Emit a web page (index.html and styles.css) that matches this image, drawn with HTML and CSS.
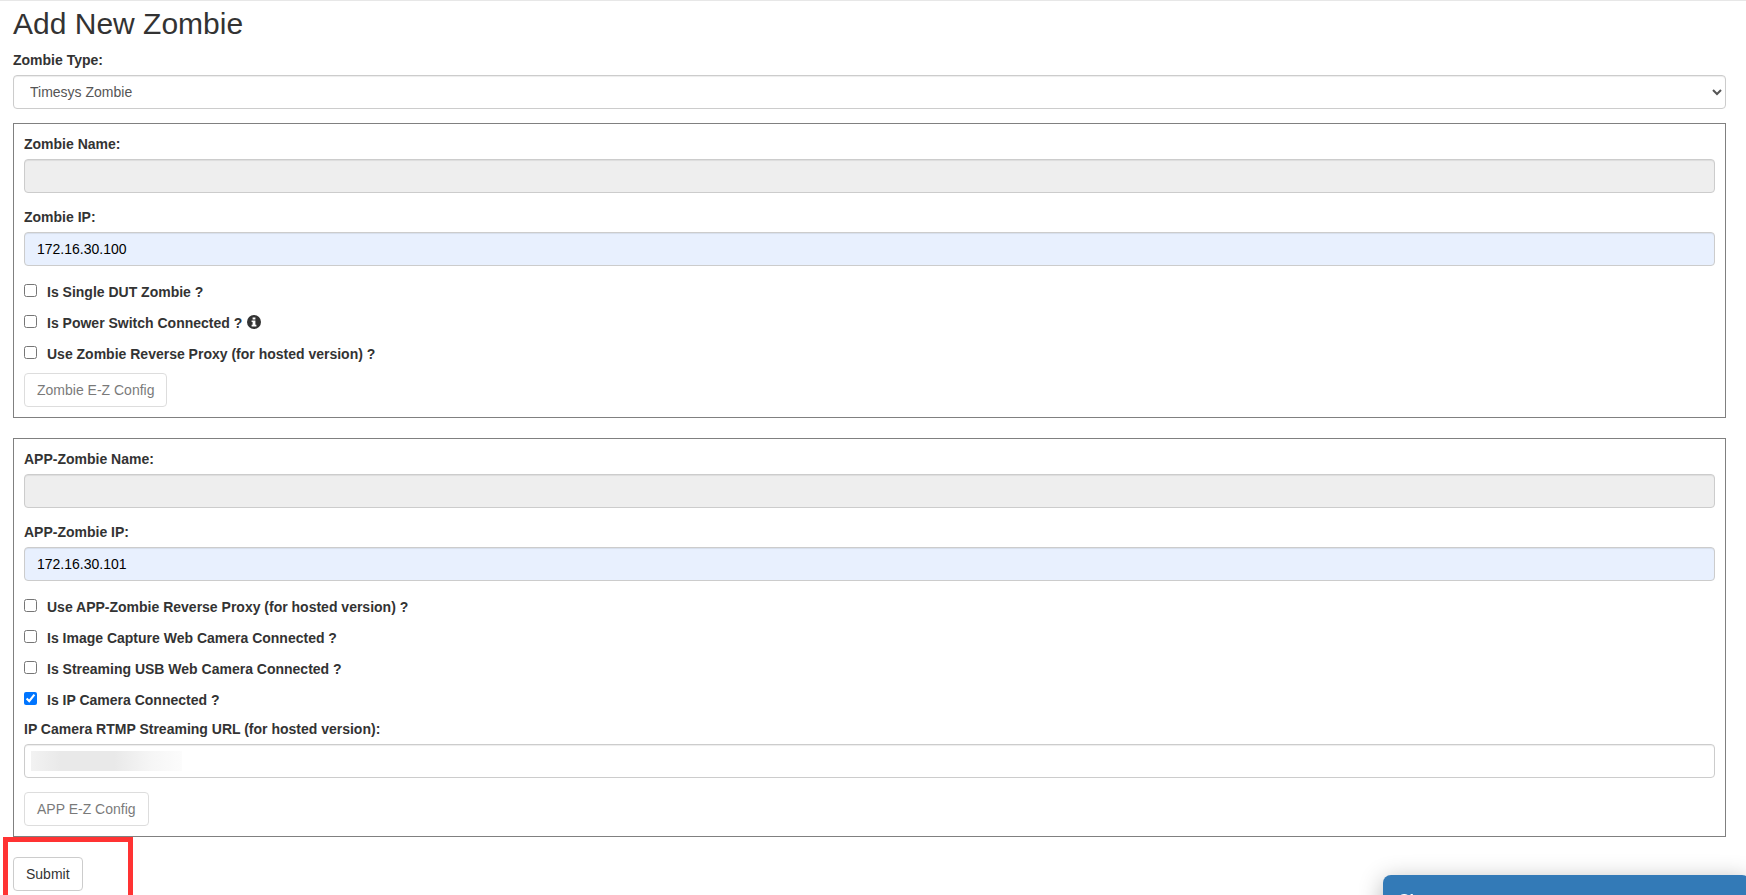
FILE: index.html
```html
<!DOCTYPE html>
<html lang="en">
  <head>
    <meta charset="UTF-8" />
    <meta name="viewport" content="width=device-width, initial-scale=1.0" />
    <title>Add New Zombie</title>
    <link rel="stylesheet" href="styles.css">
  </head>
  <body>
    <form class="zombie-form">
      <h2>Add New Zombie</h2>

      <div class="form-group">
        <label for="zombie-type">Zombie Type:</label>
        <select id="zombie-type" class="form-control">
          <option selected>Timesys Zombie</option>
        </select>
      </div>

      <div class="panel">
        <div class="form-group">
          <label for="zombie-name">Zombie Name:</label>
          <input id="zombie-name" class="form-control" type="text" disabled />
        </div>
        <div class="form-group">
          <label for="zombie-ip">Zombie IP:</label>
          <input id="zombie-ip" class="form-control autofilled" type="text" value="172.16.30.100" />
        </div>
        <div class="checks">
          <label class="check"><input type="checkbox" /> Is Single DUT Zombie ?</label>
          <label class="check">
            <input type="checkbox" /> Is Power Switch Connected ?
            <svg class="info-icon" viewBox="0 0 14 14" aria-hidden="true">
              <circle cx="7" cy="7" r="7" />
              <path d="M5.6 2.4h2.8v2H5.6zM4.6 5.5h3.8v4.3h1v1.6H4.6V9.800h1V7.100h-1z" />
            </svg>
          </label>
          <label class="check"><input type="checkbox" /> Use Zombie Reverse Proxy (for hosted version) ?</label>
        </div>
        <button class="btn" type="button" disabled>Zombie E-Z Config</button>
      </div>

      <div class="panel">
        <div class="form-group">
          <label for="app-name">APP-Zombie Name:</label>
          <input id="app-name" class="form-control" type="text" disabled />
        </div>
        <div class="form-group">
          <label for="app-ip">APP-Zombie IP:</label>
          <input id="app-ip" class="form-control autofilled" type="text" value="172.16.30.101" />
        </div>
        <div class="checks">
          <label class="check"><input type="checkbox" /> Use APP-Zombie Reverse Proxy (for hosted version) ?</label>
          <label class="check"><input type="checkbox" /> Is Image Capture Web Camera Connected ?</label>
          <label class="check"><input type="checkbox" /> Is Streaming USB Web Camera Connected ?</label>
          <label class="check"><input type="checkbox" checked /> Is IP Camera Connected ?</label>
        </div>
        <div class="form-group">
          <label for="rtmp-url">IP Camera RTMP Streaming URL (for hosted version):</label>
          <input id="rtmp-url" class="form-control redacted" type="text" />
        </div>
        <button class="btn" type="button" disabled>APP E-Z Config</button>
      </div>

      <div class="submit-row">
        <button class="btn" type="submit">Submit</button>
        <div class="highlight"></div>
      </div>
    </form>

    <div class="chat-widget">Chat</div>
  </body>
</html>
```

FILE: styles.css
```css
* {
  box-sizing: border-box;
}
body {
  margin: 0;
  height: 100vh;
  overflow: hidden;
  border-top: 1px solid #e7e7e7;
  font-family: "Liberation Sans", Arial, sans-serif;
  font-size: 14px;
  line-height: 20px;
  color: #333;
  background: #fff;
}
h2 {
  margin: 0 0 10px;
  font-size: 30px;
  font-weight: 500;
  line-height: 33px;
}
label {
  display: block;
  margin-bottom: 5px;
  font-weight: bold;
}
.zombie-form {
  padding: 6px 20px 0 13px;
}
.form-group {
  margin-bottom: 14px;
}
.form-control {
  display: block;
  width: 100%;
  height: 34px;
  padding: 6px 12px;
  border: 1px solid #ccc;
  border-radius: 4px;
  font: inherit;
  color: #555;
  background: #fff;
  box-shadow: inset 0 1px 1px rgba(0, 0, 0, 0.075);
}
.form-control:disabled {
  background: #eee;
}
.form-control.autofilled {
  color: #000;
  background: #e8f0fe;
}
.form-control.redacted {
  background: linear-gradient(to right, #f2f2f2, #e9e9e9 20%, #e9e9e9 55%, #f6f6f6 80%, #fcfcfc) 6px 6px / 151px 20px no-repeat #fff;
}
.panel {
  margin-bottom: 20px;
  padding: 10px;
  border: 1px solid #808080;
}
.checks {
  display: flex;
  flex-direction: column;
  gap: 11px;
  padding-top: 2px;
  margin-bottom: 9px;
}
.check {
  display: flex;
  align-items: flex-start;
  margin: 0;
}
.check input {
  width: 13px;
  height: 13px;
  margin: 2px 10px 0 0;
}
.info-icon {
  width: 14px;
  height: 14px;
  margin: 2px 0 0 5px;
  fill: #333;
}
.info-icon path {
  fill: #fff;
}
.btn {
  display: block;
  height: 34px;
  padding: 6px 12px;
  border: 1px solid #ccc;
  border-radius: 4px;
  font: inherit;
  color: #333;
  background: #fff;
}
.btn:disabled {
  opacity: 0.65;
}
.submit-row {
  position: relative;
}
.highlight {
  position: absolute;
  top: -20px;
  left: -10px;
  width: 130px;
  height: 70px;
  border: 5px solid #f33;
  pointer-events: none;
}
/* collapsed chat header peeking out of the bottom edge */
.chat-widget {
  position: fixed;
  right: -4px;
  bottom: -32px;
  width: 367px;
  height: 52px;
  padding: 14px 15px;
  border-radius: 8px 8px 0 0;
  font-size: 16px;
  font-weight: bold;
  line-height: 24px;
  color: #fff;
  background: #337ab7;
  box-shadow: 0 5px 25px rgba(0, 0, 0, 0.3);
}
```
